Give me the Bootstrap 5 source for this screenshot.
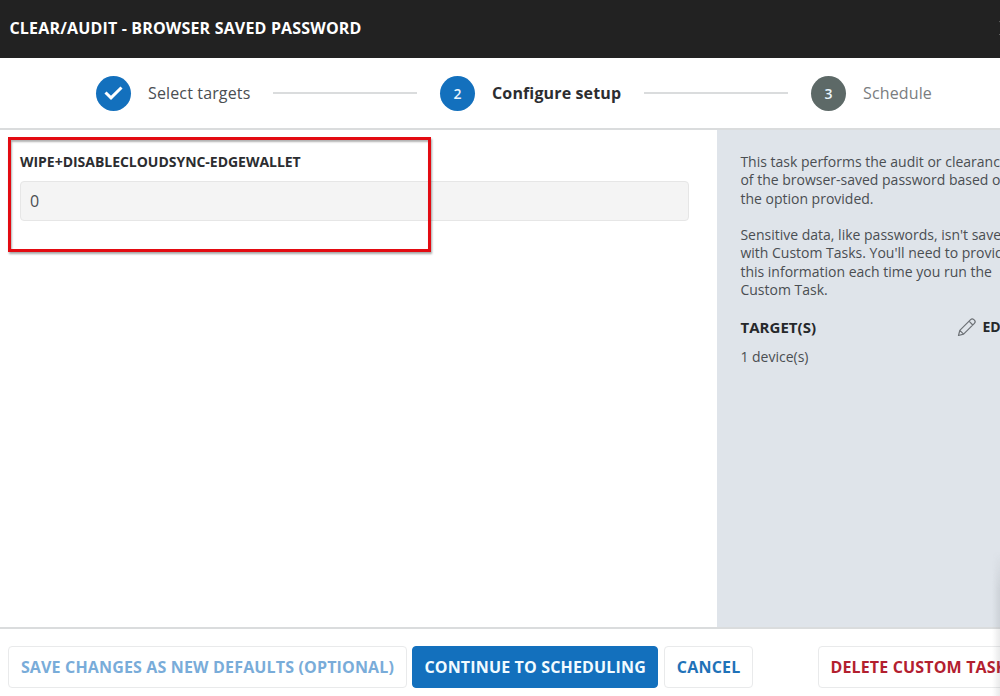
<!DOCTYPE html>
<html lang="en">
<head>
<meta charset="utf-8">
<meta name="viewport" content="width=device-width, initial-scale=1">
<title>Clear/Audit - Browser Saved Password</title>
<link href="https://cdn.jsdelivr.net/npm/bootstrap@5.3.0/dist/css/bootstrap.min.css" rel="stylesheet">
<style>
  body { font-family: "Open Sans", "Noto Sans", sans-serif; color: #4a4e52; font-size: 16px; }
  .app { width: 1000px; height: 696px; }
  .topbar { height: 58px; background: #222; color: #fff; padding: 0 0 2px 9.5px; }
  .topbar h1 { font-size: 16px; font-weight: 700; letter-spacing: .17px; line-height: 22px; }
  .close-x { width: 14px; height: 16px; margin-right: -12.5px; }
  .stepper { height: 72px; padding: 1px 0 1px 96px; border-bottom: 2px solid #dadcdd; }
  .dot { width: 35px; height: 35px; border-radius: 50%; background: #1370bd; color: #e9f5fd; font-size: 14px; font-weight: 600; margin-right: 17px; }
  .dot.later { background: #5d6967; }
  .step-name { font-size: 16px; letter-spacing: .14px; white-space: nowrap; }
  .step-first { width: 125px; }
  .step-active { width: 152px; font-weight: 700; color: #2c2d30; }
  .step-later { color: #7a7d7f; }
  .track { width: 144px; height: 2px; background: #dadcdd; margin-right: 23px; }
  .form-pane { width: 717.4px; padding: 23px 28.4px 0 20px; }
  .field-label { font-size: 14px; font-weight: 700; line-height: 18px; letter-spacing: -.03px; color: #2c2d30; margin-bottom: 10px; }
  .form-control.value { height: 40px; background: #f4f4f4; border-color: #e6e6e6; border-radius: 4px; padding: 0 9px; font-size: 16px; color: #4a4e52; }
  .highlight { left: 8px; top: 7px; width: 423px; height: 115px; border: 3px solid #e30b12; box-shadow: 1px 2px 2px rgba(0,0,0,.35), inset 1px 2px 2px rgba(0,0,0,.3); pointer-events: none; }
  .side { background: #dfe4ea; padding: 23px 0 0 23px; }
  .desc { width: 272px; font-size: 14px; line-height: 18.25px; margin-bottom: 17px; }
  .targets { height: 22px; margin-bottom: 10px; color: #26282b; }
  .targets h2 { font-size: 15px; font-weight: 700; width: 217px; letter-spacing: .05px; }
  .edit { font-size: 14px; font-weight: 700; white-space: nowrap; margin-top: -1px; }
  .edit svg { margin-right: 5px; }
  .footer-bar { height: 69px; padding: 17px 0 0 8px; border-top: 2px solid #dadcdd; }
  .footer-bar .btn { height: 42px; padding: 0; font-size: 16px; font-weight: 700; letter-spacing: .16px; border-radius: 4px; border: 1px solid #e9eaeb; white-space: nowrap; background: #fff; color: #1f72b8; flex: none; }
  .footer-bar .btn-save { width: 399px; color: #79acd9; }
  .footer-bar .btn-go { width: 246.4px; margin: 0 6px 0 5px; background: #1370bd; border-color: #1370bd; color: #f2fbff; }
  .footer-bar .btn-cancel { width: 88.6px; letter-spacing: .2px; }
  .footer-bar .btn-delete { padding: 0 11px; color: #b3202f; margin-left: 65.400px; }
  .edge-shade { right: 0; bottom: 0; width: 8px; height: 145px; background: linear-gradient(to right, rgba(90,95,100,0), rgba(90,95,100,.13)); -webkit-mask-image: linear-gradient(to bottom, transparent, #000 40px); }
</style>
</head>
<body>
<div class="app d-flex flex-column position-relative overflow-hidden bg-white">
  <header class="topbar d-flex align-items-center justify-content-between">
    <h1 class="m-0">CLEAR/AUDIT - BROWSER SAVED PASSWORD</h1>
    <svg class="close-x" viewBox="0 0 14 16" stroke="#ddd" stroke-width="1.5"><path d="M1 1l12 14M13 1L1 15"/></svg>
  </header>

  <nav class="stepper d-flex align-items-center">
    <div class="dot d-flex align-items-center justify-content-center flex-shrink-0">
      <svg width="20" height="16" viewBox="0 0 20 16" fill="none" stroke="#fff" stroke-width="3"><path d="M1.500 7.500l5.500 5.300L17.500 2.500"/></svg>
    </div>
    <span class="step-name step-first flex-shrink-0">Select targets</span>
    <span class="track flex-shrink-0"></span>
    <div class="dot d-flex align-items-center justify-content-center flex-shrink-0">2</div>
    <span class="step-name step-active flex-shrink-0">Configure setup</span>
    <span class="track flex-shrink-0"></span>
    <div class="dot later d-flex align-items-center justify-content-center flex-shrink-0">3</div>
    <span class="step-name step-later">Schedule</span>
  </nav>

  <main class="d-flex flex-grow-1">
    <section class="form-pane position-relative flex-shrink-0">
      <label class="field-label d-block" for="mode">WIPE+DISABLECLOUDSYNC-EDGEWALLET</label>
      <input id="mode" class="form-control value" type="text" value="0" readonly>
      <div class="highlight position-absolute"></div>
    </section>
    <aside class="side flex-grow-1 overflow-hidden">
      <p class="desc text-nowrap">This task performs the audit or clearance<br>of the browser-saved password based on<br>the option provided.<br><br>Sensitive data, like passwords, isn't saved<br>with Custom Tasks. You'll need to provide<br>this information each time you run the<br>Custom Task.</p>
      <div class="targets d-flex align-items-center">
        <h2 class="m-0 flex-shrink-0">TARGET(S)</h2>
        <span class="edit d-flex align-items-center">
          <svg class="flex-shrink-0" width="20" height="20" viewBox="0 0 20 20" fill="none" stroke="#6d7176" stroke-width="1.2" stroke-linejoin="round"><path d="M1.500 18.500l1.300-5.100L13.600 2.600q1.600-1.600 3.200 0l.6.6q1.600 1.600 0 3.200L6.600 17.200zM2.800 13.400l3.800 3.800M12 4.200l3.800 3.800"/></svg>EDIT</span>
      </div>
      <div class="desc m-0">1 device(s)</div>
    </aside>
  </main>

  <footer class="footer-bar d-flex align-items-start">
    <button class="btn btn-save" type="button">SAVE CHANGES AS NEW DEFAULTS (OPTIONAL)</button>
    <button class="btn btn-go" type="button">CONTINUE TO SCHEDULING</button>
    <button class="btn btn-cancel" type="button">CANCEL</button>
    <button class="btn btn-delete" type="button">DELETE CUSTOM TASK</button>
  </footer>
  <div class="edge-shade position-absolute"></div>
</div>
<script src="https://cdn.jsdelivr.net/npm/bootstrap@5.3.0/dist/js/bootstrap.bundle.min.js"></script>
</body>
</html>
